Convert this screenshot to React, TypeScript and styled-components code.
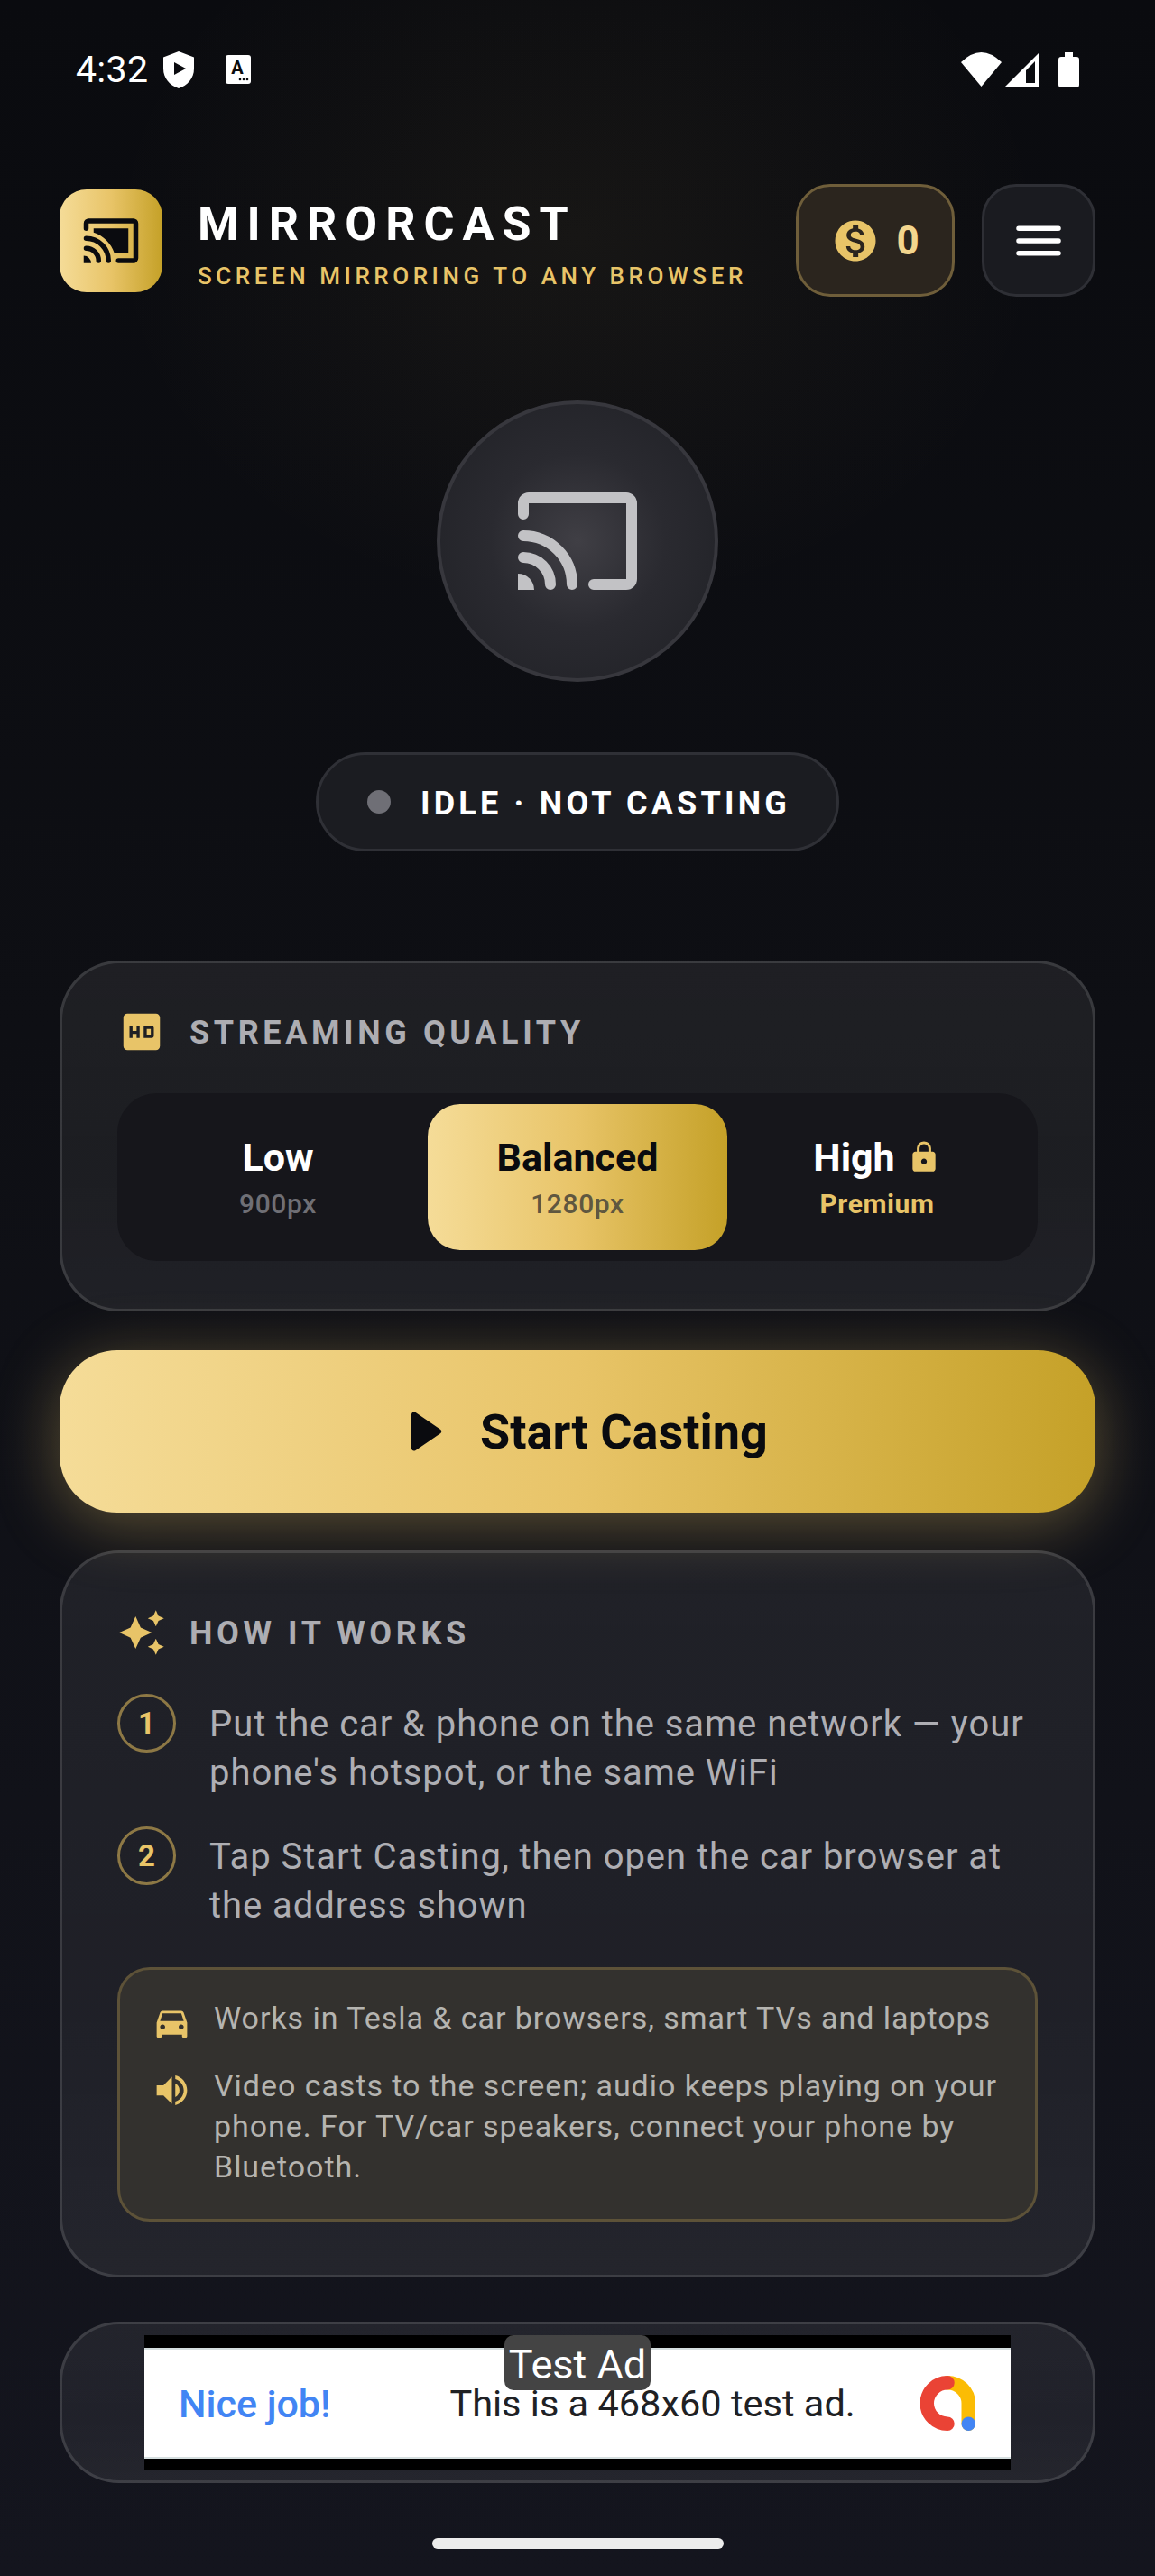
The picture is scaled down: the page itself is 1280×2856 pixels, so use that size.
import React from "react";
import styled, { createGlobalStyle } from "styled-components";
import {
  MdAutoAwesome,
  MdDirectionsCar,
  MdHd,
  MdLock,
  MdMonetizationOn,
  MdVolumeUp,
} from "react-icons/md";

const Global = createGlobalStyle`
  html, body { margin: 0; padding: 0; background: #0c0d12; }
  * { box-sizing: border-box; }
  body { font-family: Roboto, "Liberation Sans", sans-serif; }
`;

const gold = "linear-gradient(90deg, #f5dc98 0%, #e8c468 50%, #c5a128 100%)";

const Page = styled.div`
  width: 1280px;
  height: 2856px;
  overflow: hidden;
  background:
    radial-gradient(ellipse 520px 420px at 640px 260px, rgba(232, 196, 104, 0.055), rgba(232, 196, 104, 0) 100%),
    linear-gradient(180deg, #0a0b0f 0%, #0e0f14 40%, #14151e 100%);
  display: flex;
  flex-direction: column;
  align-items: center;
`;

const StatusBar = styled.div`
  width: 100%;
  height: 154px;
  padding: 0 84px;
  display: flex;
  align-items: center;
  color: #fff;
  flex: none;
`;
const Time = styled.span`
  font-size: 41px;
  letter-spacing: 0.3px;
  margin-right: 17px;
`;
const StatusIcons = styled.div`
  margin-left: auto;
  display: flex;
  align-items: center;
  gap: 4px;
`;

const Header = styled.header`
  width: 1148px;
  height: 125px;
  margin-top: 50px;
  display: flex;
  align-items: center;
  flex: none;
`;
const Logo = styled.div`
  width: 114px;
  height: 114px;
  border-radius: 30px;
  background: ${gold};
  color: #0a0b0f;
  display: flex;
  align-items: center;
  justify-content: center;
  flex: none;
`;
const Brand = styled.div`
  margin-left: 39px;
  display: flex;
  flex-direction: column;
  padding-top: 9px;
`;
const BrandName = styled.div`
  font-size: 52px;
  line-height: 62px;
  font-weight: 700;
  letter-spacing: 9px;
  color: #fff;
`;
const BrandSub = styled.div`
  font-size: 26px;
  line-height: 36px;
  margin-top: 8px;
  font-weight: 500;
  letter-spacing: 4.55px;
  color: #e8c468;
  white-space: nowrap;
`;
const CoinButton = styled.div`
  margin-left: auto;
  width: 176px;
  height: 125px;
  border-radius: 38px;
  border: 3px solid #6f5e3a;
  background: #2b251e;
  display: flex;
  align-items: center;
  justify-content: center;
  gap: 18px;
  color: #e8c468;
`;
const CoinCount = styled.span`
  font-size: 44px;
  font-weight: 700;
  color: #f3d68e;
`;
const MenuButton = styled.div`
  margin-left: 30px;
  width: 126px;
  height: 125px;
  border-radius: 38px;
  border: 3px solid #2e2f35;
  background: #1a1b20;
  color: #fff;
  display: flex;
  align-items: center;
  justify-content: center;
`;

const CastCircle = styled.div`
  width: 312px;
  height: 312px;
  margin-top: 115px;
  border-radius: 50%;
  border: 4px solid #37373d;
  background: radial-gradient(circle, #403f45 0%, #2a2a30 45%, #1f2025 100%);
  color: #c2c2c5;
  display: flex;
  align-items: center;
  justify-content: center;
  flex: none;
`;
const StatusPill = styled.div`
  width: 580px;
  height: 110px;
  margin-top: 78px;
  border-radius: 55px;
  border: 3px solid #2f3036;
  background: #1b1c21;
  display: flex;
  align-items: center;
  padding-left: 54px;
  flex: none;
`;
const StatusDot = styled.span`
  width: 26px;
  height: 26px;
  border-radius: 50%;
  background: #6f6f76;
  margin-right: 33px;
`;
const StatusText = styled.span`
  font-size: 36px;
  line-height: 36px;
  padding-top: 4px;
  font-weight: 700;
  letter-spacing: 4.2px;
  color: #fff;
  white-space: nowrap;
`;

const Card = styled.section<{ $top: number; $pad: string }>`
  width: 1148px;
  margin-top: ${(p) => p.$top}px;
  padding: ${(p) => p.$pad};
  border-radius: 66px;
  border: 3px solid rgba(255, 255, 255, 0.12);
  background: linear-gradient(180deg, rgba(255, 255, 255, 0.07), rgba(255, 255, 255, 0.06) 60%, rgba(255, 255, 255, 0.075));
  flex: none;
`;
const CardTitle = styled.div`
  height: 52px;
  display: flex;
  align-items: center;
  gap: 26px;
  margin-bottom: 42px;
  color: #e8c468;
`;
const CardTitleText = styled.span`
  font-size: 36px;
  line-height: 40px;
  padding-top: 2px;
  font-weight: 700;
  letter-spacing: 4.6px;
  color: #adadb2;
`;

const Segments = styled.div`
  height: 186px;
  padding: 12px;
  border-radius: 44px;
  background: #16161b;
  display: grid;
  grid-template-columns: repeat(3, 1fr);
`;
const Segment = styled.div<{ $active?: boolean }>`
  border-radius: 36px;
  background: ${(p) => (p.$active ? gold : "transparent")};
  color: ${(p) => (p.$active ? "#0a0b0f" : "#fff")};
  display: flex;
  flex-direction: column;
  align-items: center;
  justify-content: center;
`;
const SegmentName = styled.div`
  height: 50px;
  font-size: 43px;
  line-height: 52px;
  font-weight: 700;
  display: flex;
  align-items: center;
  gap: 13px;
`;
const SegmentSub = styled.div<{ $tone: "muted" | "dark" | "gold" }>`
  margin-top: 9px;
  font-size: 30px;
  line-height: 36px;
  font-weight: ${(p) => (p.$tone === "gold" ? 700 : 500)};
  letter-spacing: 0.6px;
  color: ${(p) => (p.$tone === "gold" ? "#e8c468" : p.$tone === "dark" ? "#5f5740" : "#6f6f75")};
`;
const LockIcon = styled(MdLock)`
  color: #e8c468;
`;

const StartButton = styled.button`
  width: 1148px;
  height: 180px;
  margin-top: 43px;
  padding: 0 0 0 5px;
  border: 0;
  border-radius: 64px;
  background: ${gold};
  box-shadow: 0 12px 70px rgba(232, 196, 104, 0.36);
  color: #0a0b0f;
  display: flex;
  align-items: center;
  justify-content: center;
  gap: 32px;
  font-family: inherit;
  font-size: 54px;
  font-weight: 700;
  flex: none;
`;

const Step = styled.div`
  display: flex;
  gap: 37px;
  margin-bottom: 32px;
`;
const StepNumber = styled.div`
  width: 65px;
  height: 65px;
  border-radius: 50%;
  border: 3px solid #8d7845;
  color: #e8c468;
  font-size: 33px;
  font-weight: 700;
  display: flex;
  align-items: center;
  justify-content: center;
  flex: none;
`;
const StepText = styled.div`
  margin-top: 7px;
  font-size: 40px;
  line-height: 54px;
  letter-spacing: 0.95px;
  color: #aeaeb3;
`;
const Note = styled.div`
  margin-top: 41px;
  padding: 31px 30px 35px 35px;
  border-radius: 36px;
  border: 3px solid #5d5238;
  background: #33312e;
  display: flex;
  flex-direction: column;
  gap: 25px;
`;
const NoteRow = styled.div`
  display: flex;
  gap: 24px;
  color: #e8c468;
`;
const NoteIcon = styled.div`
  width: 45px;
  height: 45px;
  margin-top: 5px;
  flex: none;
`;
const NoteText = styled.div`
  font-size: 34px;
  line-height: 45px;
  letter-spacing: 0.95px;
  color: #b5b4b0;
`;

const AdFrame = styled.div`
  position: relative;
  width: 960px;
  height: 150px;
  margin: 0 auto;
  background: #000;
  display: flex;
  align-items: center;
`;
const AdBanner = styled.div`
  width: 100%;
  height: 123px;
  padding: 0 39px 0 38px;
  margin-top: 1px;
  background: #fff;
  border-top: 2px solid #d5dedf;
  border-bottom: 2px solid #d5dedf;
  display: flex;
  align-items: center;
`;
const AdLabel = styled.div`
  position: absolute;
  top: 0;
  left: 399px;
  width: 162px;
  height: 61px;
  padding-top: 3px;
  border-radius: 10px;
  background: #444;
  color: #fff;
  font-size: 45px;
  line-height: 59px;
  text-align: center;
  white-space: nowrap;
`;
const AdHeadline = styled.span`
  font-size: 43px;
  font-weight: 500;
  color: #4285f4;
  margin-right: 132px;
`;
const AdBody = styled.span`
  font-size: 41.5px;
  color: #202124;
  margin-right: auto;
`;

const HomeBar = styled.div`
  width: 323px;
  height: 12px;
  margin-top: 61px;
  border-radius: 6px;
  background: #ececec;
  flex: none;
`;

const CastIcon = ({ size, connected }: { size: number; connected?: boolean }) => (
  <svg width={size} height={size} viewBox="0 0 24 24" fill="none" stroke="currentColor" strokeWidth="2" strokeLinecap="round">
    <path d="M2 7V5a1 1 0 0 1 1-1h18a1 1 0 0 1 1 1v14a1 1 0 0 1-1 1h-6" />
    <path d="M2 11a9 9 0 0 1 9 9" />
    <path d="M2 15a5 5 0 0 1 5 5" />
    <path d="M1 18a3 3 0 0 1 3 3H1z" fill="currentColor" stroke="none" />
    {connected && <path d="M5 7v1.63c3.96 1.28 7.09 4.41 8.37 8.37H19V7H5z" fill="currentColor" stroke="none" />}
  </svg>
);

const AdLogo = () => (
  <svg width="61" height="61" viewBox="0 0 61 61" fill="none" strokeWidth="15.5" strokeLinecap="round">
    <path d="M30 7.75A23.25 22.75 0 0 1 53.25 30.5V53.25" stroke="#fbbc04" />
    <path d="M30 7.75a22.75 22.75 0 0 0 0 45.5" stroke="#ea4335" />
    <circle cx="53.25" cy="53.25" r="7.75" fill="#4285f4" />
  </svg>
);

export default function App() {
  return (
    <Page>
      <Global />
      <StatusBar>
        <Time>4:32</Time>
        <svg width="34" height="41" viewBox="0 0 34 41">
          <path d="M17 0L34 6.5V19C34 30 27 37.5 17 41C7 37.5 0 30 0 19V6.5Z" fill="#fff" />
          <path d="M12 12L25 19L12 26Z" fill="#0a0b0f" />
        </svg>
        <svg width="28" height="32" viewBox="0 0 28 32" style={{ marginLeft: 35 }}>
          <rect width="28" height="32" rx="3" fill="#fff" />
          <text x="13" y="21" fontFamily="Roboto" fontWeight="700" fontSize="20" textAnchor="middle" fill="#0a0b0f">A</text>
          <circle cx="16" cy="27" r="1.3" fill="#0a0b0f" />
          <circle cx="20" cy="27" r="1.3" fill="#0a0b0f" />
          <circle cx="24" cy="27" r="1.3" fill="#0a0b0f" />
        </svg>
        <StatusIcons>
          <svg width="45" height="38" viewBox="0 0 45 38">
            <path d="M0 11Q22.5 -11 45 11L22.5 38Z" fill="#fff" />
          </svg>
          <svg width="37" height="37" viewBox="0 0 37 37">
            <path fillRule="evenodd" d="M37 0V37H0ZM33 9L23 19V33H33Z" fill="#fff" />
          </svg>
          <svg width="23" height="39" viewBox="0 0 23 39" style={{ marginLeft: 18 }}>
            <path d="M7 0H16V5H20A3 3 0 0 1 23 8V36A3 3 0 0 1 20 39H3A3 3 0 0 1 0 36V8A3 3 0 0 1 3 5H7Z" fill="#fff" />
          </svg>
        </StatusIcons>
      </StatusBar>

      <Header>
        <Logo>
          <CastIcon size={66} connected />
        </Logo>
        <Brand>
          <BrandName>MIRRORCAST</BrandName>
          <BrandSub>SCREEN MIRRORING TO ANY BROWSER</BrandSub>
        </Brand>
        <CoinButton>
          <MdMonetizationOn size={54} />
          <CoinCount>0</CoinCount>
        </CoinButton>
        <MenuButton>
          <svg width="66" height="66" viewBox="0 0 24 24" fill="none" stroke="currentColor" strokeWidth="2" strokeLinecap="round">
            <path d="M4 7h16M4 12h16M4 17h16" />
          </svg>
        </MenuButton>
      </Header>

      <CastCircle>
        <CastIcon size={144} />
      </CastCircle>
      <StatusPill>
        <StatusDot />
        <StatusText>IDLE · NOT CASTING</StatusText>
      </StatusPill>

      <Card $top={121} $pad="50px 61px 53px">
        <CardTitle>
          <MdHd size={54} />
          <CardTitleText>STREAMING QUALITY</CardTitleText>
        </CardTitle>
        <Segments>
          <Segment>
            <SegmentName>Low</SegmentName>
            <SegmentSub $tone="muted">900px</SegmentSub>
          </Segment>
          <Segment $active>
            <SegmentName>Balanced</SegmentName>
            <SegmentSub $tone="dark">1280px</SegmentSub>
          </Segment>
          <Segment>
            <SegmentName>
              High
              <LockIcon size={38} />
            </SegmentName>
            <SegmentSub $tone="gold">Premium</SegmentSub>
          </Segment>
        </Segments>
      </Card>

      <StartButton>
        <svg width="66" height="66" viewBox="0 0 24 24" fill="currentColor">
          <path d="M8 5.14v13.72c0 .79.87 1.27 1.54.84l10.1-6.86c.62-.4.62-1.29 0-1.69L9.54 4.3C8.87 3.87 8 4.35 8 5.14z" />
        </svg>
        Start Casting
      </StartButton>

      <Card $top={42} $pad="62px 61px 59px">
        <CardTitle>
          <MdAutoAwesome size={54} />
          <CardTitleText>HOW IT WORKS</CardTitleText>
        </CardTitle>
        <Step>
          <StepNumber>1</StepNumber>
          <StepText>Put the car &amp; phone on the same network — your phone's hotspot, or the same WiFi</StepText>
        </Step>
        <Step>
          <StepNumber>2</StepNumber>
          <StepText>Tap Start Casting, then open the car browser at the address shown</StepText>
        </Step>
        <Note>
          <NoteRow>
            <NoteIcon>
              <MdDirectionsCar size={45} />
            </NoteIcon>
            <NoteText>Works in Tesla &amp; car browsers, smart TVs and laptops</NoteText>
          </NoteRow>
          <NoteRow>
            <NoteIcon>
              <MdVolumeUp size={45} />
            </NoteIcon>
            <NoteText>Video casts to the screen; audio keeps playing on your phone. For TV/car speakers, connect your phone by Bluetooth.</NoteText>
          </NoteRow>
        </Note>
      </Card>

      <Card $top={49} $pad="12px 0 11px">
        <AdFrame>
          <AdBanner>
            <AdHeadline>Nice job!</AdHeadline>
            <AdBody>This is a 468x60 test ad.</AdBody>
            <AdLogo />
          </AdBanner>
          <AdLabel>Test Ad</AdLabel>
        </AdFrame>
      </Card>

      <HomeBar />
    </Page>
  );
}
